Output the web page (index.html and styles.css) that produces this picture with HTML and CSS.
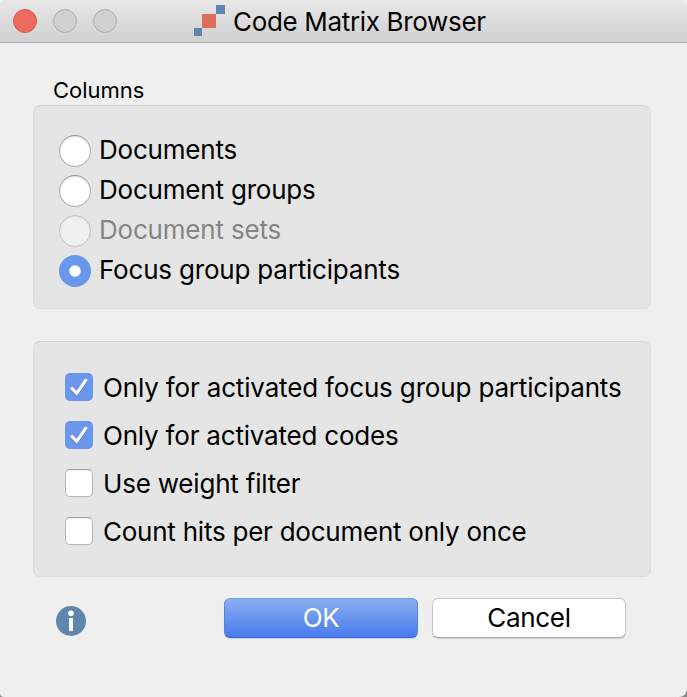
FILE: index.html
```html
<!DOCTYPE html>
<html lang="en">
<head>
<meta charset="utf-8">
<title>Code Matrix Browser</title>
<link rel="stylesheet" href="styles.css">
</head>
<body>
<main class="window">
  <header class="titlebar">
    <div class="lights"><i class="light close"></i><i class="light"></i><i class="light"></i></div>
    <svg class="logo" width="31" height="31" viewBox="0 0 31 31" shape-rendering="crispEdges"><path fill="#5f87ae" d="M22 0h9v9h-9zM0 23h8v8H0z"/><path fill="#dc6e5a" d="M8 9h14v14H8z"/></svg>
    <h1 class="title">Code Matrix Browser</h1>
  </header>
  <h2 class="heading">Columns</h2>
  <section class="panel radios">
    <label class="option"><i class="radio"></i><span>Documents</span></label>
    <label class="option"><i class="radio"></i><span>Document groups</span></label>
    <label class="option disabled"><i class="radio"></i><span>Document sets</span></label>
    <label class="option"><i class="radio selected"></i><span>Focus group participants</span></label>
  </section>
  <section class="panel checks">
    <label class="option participants"><i class="check on"><svg width="28" height="28" viewBox="0 0 28 28"><path d="M7 15.5l4.8 5L20.8 7.2"/></svg></i><span>Only for activated focus group participants</span></label>
    <label class="option"><i class="check on"><svg width="28" height="28" viewBox="0 0 28 28"><path d="M7 15.5l4.8 5L20.8 7.2"/></svg></i><span>Only for activated codes</span></label>
    <label class="option"><i class="check"></i><span>Use weight filter</span></label>
    <label class="option hits"><i class="check"></i><span>Count hits per document only once</span></label>
  </section>
  <footer class="actions">
    <svg class="info" width="30" height="30" viewBox="0 0 30 30"><circle cx="15" cy="15" r="15" fill="#5f87ae"/><circle cx="15" cy="7.2" r="2.8" fill="#fff"/><path fill="#fff" d="M13 12h4v13h-4z"/></svg>
    <button class="button primary">OK</button>
    <button class="button">Cancel</button>
  </footer>
</main>
</body>
</html>
```
FILE: styles.css
```css
* { box-sizing: border-box; }
body { margin: 0; background: linear-gradient(#f2f2f2 50%, #8a8a8a 50%); font-family: Inter, sans-serif; color: #000; }
.window { height: 697px; overflow: hidden; background: #efefef; border-radius: 5px 8px 8px 4px; }
.titlebar { height: 43px; display: flex; background: linear-gradient(#e8e8e8, #d0d0d0); border-bottom: 1px solid #adadad; }
.lights { display: flex; gap: 16px; padding: 9px 0 0 13px; width: 194px; }
.light { width: 24px; height: 24px; border-radius: 50%; background: #d0d0d0; border: 1px solid #b0b0b0; }
.close { background: #ec6b5f; border-color: #d9564b; }
.logo { margin-top: 5px; }
.title { margin: 0 0 0 8px; font-size: 26px; font-weight: 400; line-height: 43px; letter-spacing: -0.33px; }
.heading { margin: 33px 0 0 53px; font-size: 22px; line-height: 28px; font-weight: 400; }
.panel { margin-left: 33px; width: 618px; background: #e5e5e5; border: 1px solid #dcdcdc; border-top-color: #d3d3d3; border-radius: 7px; font-size: 26px; letter-spacing: -0.2px; }
.radios { height: 204px; margin-top: 1px; padding: 25px 0 0 25px; }
.checks { height: 236px; margin-top: 32px; padding: 21px 0 0 31px; }
.option { display: flex; align-items: center; white-space: nowrap; }
.radios .option { height: 40px; gap: 8px; }
.radios .option span { margin-top: -3px; }
.checks .option { height: 48px; gap: 10px; }
.participants { letter-spacing: -0.16px; }
.hits { letter-spacing: -0.24px; }
.radio { width: 32px; height: 32px; border-radius: 50%; background: #fff; border: 1px solid #b0b0b0; border-top-color: #969696; box-shadow: inset 0 1px 2px #0002; }
.selected { border: 0; box-shadow: none; background: radial-gradient(circle, #fff 5.2px, #6897ec 6.2px); }
.disabled { color: #858585; }
.disabled .radio { background: #f0f0f0; border-color: #c4c4c4; box-shadow: inset 0 1px 2px #0001; }
.check { width: 28px; height: 28px; border-radius: 5px; background: #fff; border: 1px solid #b8b8b8; border-top-color: #9c9c9c; box-shadow: inset 0 1px 2px #0001; }
.on { border: 0; box-shadow: none; background: #6897ec; }
.on svg { display: block; fill: none; stroke: #fff; stroke-width: 3.1; stroke-linecap: round; stroke-linejoin: round; filter: drop-shadow(0 1px 0.5px #0003); }
.actions { display: flex; padding: 21px 0 0 56px; }
.info { margin-top: 8px; }
.button { width: 194px; height: 40px; margin: 0 0 0 14px; border: 1px solid #c8c8c8; border-bottom-color: #aaa; border-radius: 6px; background: #fff; color: #000; font: 26px Inter, sans-serif; letter-spacing: -0.3px; padding: 0 0 2px; box-shadow: 0 1px 1px #0002; }
.primary { margin-left: 138px; color: #fff; border-color: #6ca0ed #5484e8 #3b65e3; background: linear-gradient(#8ab0ed, #487aee); background-origin: border-box; }
```
